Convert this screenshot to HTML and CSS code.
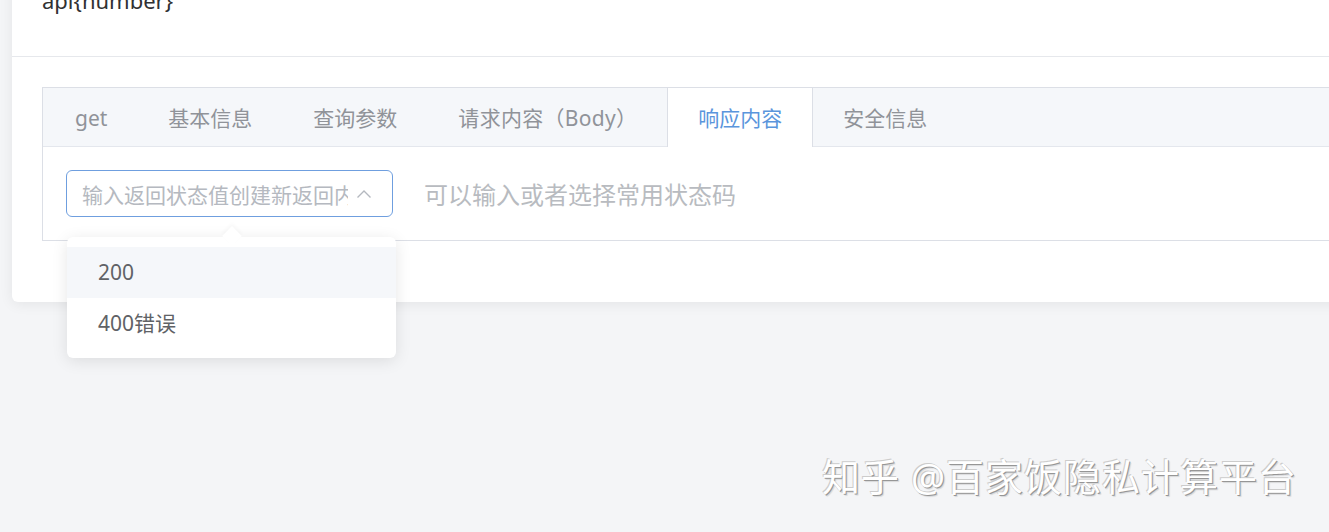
FILE: index.html
```html
<!DOCTYPE html>
<html lang="zh-CN">
<head>
    <meta charset="UTF-8">
    <meta name="viewport" content="width=device-width, initial-scale=1.0">
    <title>接口编辑</title>
    <link rel="stylesheet" href="styles.css">
</head>
<body>
    <div class="page">
        <div class="card">
            <div class="card-head">
                <span class="api-title">api{number}</span>
            </div>
            <div class="card-body">
                <div class="tabs">
                    <div class="tab-nav">
                        <div class="tab-item">get</div>
                        <div class="tab-item">基本信息</div>
                        <div class="tab-item">查询参数</div>
                        <div class="tab-item">请求内容（Body）</div>
                        <div class="tab-item active">响应内容</div>
                        <div class="tab-item">安全信息</div>
                    </div>
                    <div class="tab-content">
                        <div class="select-wrap">
                            <div class="select-input">
                                <span class="placeholder">输入返回状态值创建新返回内容</span>
                                <svg class="chevron" width="16" height="10" viewBox="0 0 16 10">
                                    <path d="M1.5 8.5 L8 2 L14.5 8.5" fill="none" stroke="#b4b8bf" stroke-width="1.4"/>
                                </svg>
                            </div>
                            <div class="dropdown">
                                <span class="caret"></span>
                                <div class="option hover">200</div>
                                <div class="option">400错误</div>
                            </div>
                        </div>
                        <span class="hint">可以输入或者选择常用状态码</span>
                    </div>
                </div>
            </div>
        </div>
        <div class="watermark">知乎 @百家饭隐私计算平台</div>
    </div>
</body>
</html>
```

FILE: styles.css
```css
html, body {
    margin: 0;
    padding: 0;
    height: 100%;
    overflow: hidden;
}
body {
    background-color: #f4f5f7;
    font-family: "Noto Sans", "Noto Sans CJK SC", sans-serif;
    color: #303133;
}
.page {
    position: relative;
    height: 100%;
}
.card {
    margin: -30px -40px 0 12px;
    background: #fff;
    border-radius: 6px;
    box-shadow: 0 2px 14px rgba(0, 0, 0, 0.07);
}
.card-head {
    padding: 0 30px;
    border-bottom: 1px solid #e6e8ec;
    box-sizing: border-box;
    height: 87px;
}
.api-title {
    display: block;
    padding-top: 15px;
    font-size: 22px;
    line-height: 30px;
    color: #303133;
}
.card-body {
    padding: 30px 0 61px 30px;
}
.tabs {
    border: 1px solid #dcdfe6;
    border-right: none;
    background: #fff;
}
.tab-nav {
    display: flex;
    background: #f5f7fa;
    border-bottom: 1px solid #e4e7ed;
    height: 58px;
}
.tab-item {
    padding: 3px 30px 0;
    height: 58px;
    box-sizing: border-box;
    line-height: 55px;
    font-size: 21px;
    color: #909399;
    border-left: 1px solid transparent;
    border-right: 1px solid transparent;
    margin-left: -1px;
    white-space: nowrap;
}
.tab-item:first-child {
    margin-left: 0;
    padding-left: 31px;
}
.tab-item:nth-child(4) {
    letter-spacing: 0.3px;
}
.tab-item.active {
    background: #fff;
    color: #5a95dc;
    border-left-color: #dcdfe6;
    border-right-color: #dcdfe6;
    height: 59px;
}
.tab-content {
    display: flex;
    align-items: center;
    gap: 31px;
    padding: 23px;
}
.select-wrap {
    position: relative;
}
.select-input {
    width: 327px;
    height: 47px;
    box-sizing: border-box;
    border: 1px solid #6f9fdf;
    border-radius: 6px;
    display: flex;
    align-items: center;
    padding: 0 20px 0 15px;
    gap: 8px;
}
.placeholder {
    flex: 1;
    overflow: hidden;
    white-space: nowrap;
    font-size: 21px;
    color: #b5b9c0;
}
.chevron {
    flex: none;
}
.dropdown {
    position: absolute;
    top: 67px;
    left: 1px;
    width: 329px;
    box-sizing: border-box;
    padding: 10px 0 9px;
    background: #fff;
    border-radius: 6px;
    box-shadow: 0 3px 16px rgba(0, 0, 0, 0.1);
    z-index: 2;
}
.caret {
    position: absolute;
    top: -8px;
    left: 158px;
    width: 14px;
    height: 14px;
    background: #fff;
    transform: rotate(45deg);
    box-shadow: -2px -2px 4px rgba(0, 0, 0, 0.03);
}
.option {
    position: relative;
    height: 51px;
    line-height: 51px;
    padding: 0 31px;
    font-size: 21px;
    color: #606266;
}
.option.hover {
    background: #f5f7fa;
}
.hint {
    font-size: 24px;
    color: #b8bbc0;
}
.watermark {
    position: absolute;
    left: 822px;
    top: 481px;
    font-size: 38px;
    line-height: 50px;
    letter-spacing: 1px;
    color: #fff;
    text-shadow: 1px 1px 0 #969696, -1px -1px 0 #cccccc, 2px 2px 1px rgba(0, 0, 0, 0.12);
    white-space: nowrap;
}
```
